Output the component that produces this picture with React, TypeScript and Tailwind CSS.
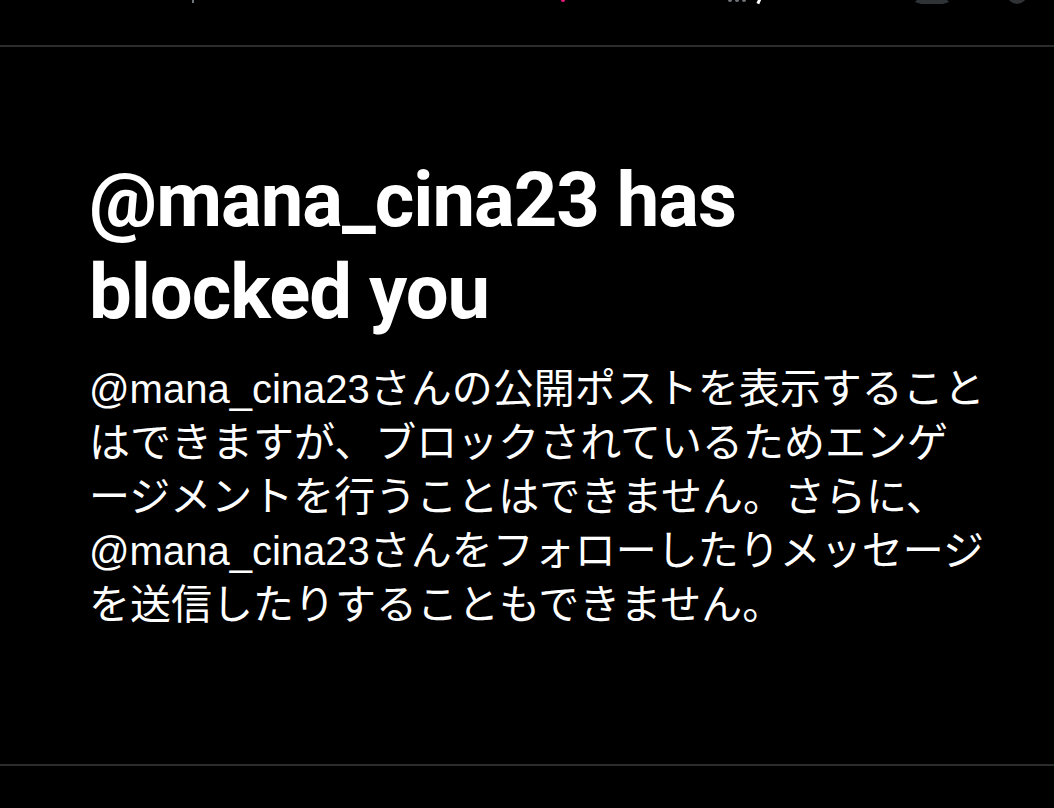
import React from "react";

function Latin({ children }: { children: React.ReactNode }) {
  return (
    <span className="text-[40px]" style={{ fontFamily: '"Liberation Sans", sans-serif' }}>
      {children}
    </span>
  );
}

export default function App() {
  return (
    <div className="w-[1054px] h-[808px] bg-black overflow-hidden flex flex-col">
      <header className="h-[47px] shrink-0 border-b-2 border-[#2a2c2e] overflow-hidden flex items-start">
        <div className="ml-[188px] -mt-[20px] w-[6px] h-[23px] border-r-2 border-[#71767b]" />
        <div className="ml-[367px] -mt-[20px] w-[4px] h-[22px] rounded-full bg-[#f91880]" />
        <div className="ml-[163px] -mt-[2px] flex gap-[3px]">
          <span className="w-[4px] h-[4px] rounded-full bg-[#71767b]" />
          <span className="w-[4px] h-[4px] rounded-full bg-[#71767b]" />
          <span className="w-[4px] h-[4px] rounded-full bg-[#71767b]" />
        </div>
        <div className="ml-[12px] -mt-[4px] w-[3px] h-[8px] bg-white rotate-[25deg]" />
        <svg className="ml-[152px] -mt-[22px]" width="38" height="26" viewBox="0 0 38 26">
          <path d="M2 24 L19 6 L36 24 L30 26 L8 26 Z" fill="#2f3336" />
        </svg>
        <div className="ml-[56px] -mt-[16px] w-[20px] h-[20px] rounded-full bg-[#2f3336]" />
      </header>
      <main className="h-[719px] shrink-0 border-b-2 border-[#2a2c2e] pl-[89px] pr-[10px] pt-[107px]">
        <h1
          className="text-[76px] leading-[92px] font-bold text-white tracking-[-1px]"
          style={{ fontFamily: '"Roboto", sans-serif' }}
        >
          @mana_cina23 has
          <br />
          blocked you
        </h1>
        <p
          className="mt-[24px] text-[41px] leading-[54px] text-white whitespace-nowrap"
          style={{ fontFamily: '"Liberation Sans", "Noto Sans CJK JP", sans-serif' }}
        >
          <Latin>@mana_cina23</Latin>さんの公開ポストを表示すること
          <br />
          はできますが、ブロックされているためエンゲ
          <br />
          ージメントを行うことはできません。さらに、
          <br />
          <Latin>@mana_cina23</Latin>さんをフォローしたりメッセージ
          <br />
          を送信したりすることもできません。
        </p>
      </main>
    </div>
  );
}
